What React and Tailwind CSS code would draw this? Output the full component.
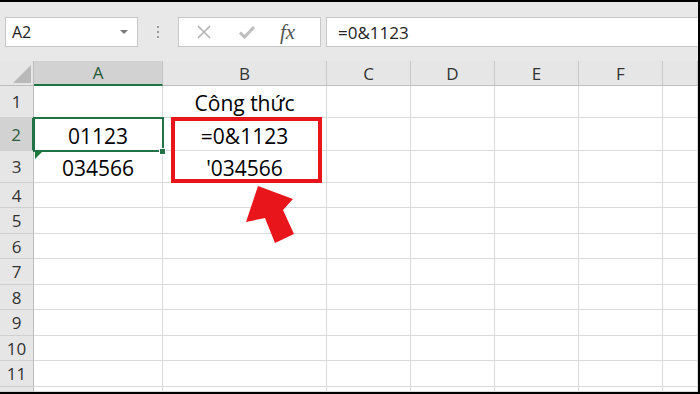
import React from 'react';

const FONT = { fontFamily: '"Open Sans", "Noto Sans", sans-serif' };

const COLS = [
  { key: 'A', label: 'A', w: 'w-[129px]' },
  { key: 'B', label: 'B', w: 'w-[164px]' },
  { key: 'C', label: 'C', w: 'w-[84px]' },
  { key: 'D', label: 'D', w: 'w-[84px]' },
  { key: 'E', label: 'E', w: 'w-[84px]' },
  { key: 'F', label: 'F', w: 'w-[84px]' },
  { key: 'G', label: '', w: 'w-[35px]' },
];

const ROWS = [
  { n: '1', h: 'h-[32px]', cells: { B: 'Công thức' } },
  { n: '2', h: 'h-[33px]', cells: { A: '01123', B: '=0&1123' }, active: true },
  { n: '3', h: 'h-[32px]', cells: { A: '034566', B: "'034566" } },
  { n: '4', h: 'h-[25px]', cells: {} },
  { n: '5', h: 'h-[26px]', cells: {} },
  { n: '6', h: 'h-[25px]', cells: {} },
  { n: '7', h: 'h-[26px]', cells: {} },
  { n: '8', h: 'h-[25px]', cells: {} },
  { n: '9', h: 'h-[26px]', cells: {} },
  { n: '10', h: 'h-[25px]', cells: {} },
  { n: '11', h: 'h-[26px]', cells: {} },
  { n: '', h: 'h-[5px]', cells: {} },
];

function Toolbar() {
  return (
    <div className="h-[59px] bg-[#e8e8e8] flex items-start pt-[15px] pl-[5px]" style={FONT}>
      {/* Name box */}
      <div className="w-[133px] h-[30px] bg-white border border-[#c8c8c8] flex items-center pl-[6px] pr-[9px]">
        <span className="text-[16px] text-[#222] leading-none">A2</span>
        <svg width="8" height="5" viewBox="0 0 8 5" className="ml-auto">
          <path d="M0 0 L8 0 L4 4 Z" fill="#7a7a7a" />
        </svg>
      </div>

      {/* Grip dots */}
      <div className="w-[40px] h-[30px] flex flex-col items-center justify-center gap-[3px]">
        <span className="w-[2px] h-[2px] bg-[#9a9a9a]" />
        <span className="w-[2px] h-[2px] bg-[#9a9a9a]" />
        <span className="w-[2px] h-[2px] bg-[#9a9a9a]" />
      </div>

      {/* Cancel / Enter / fx */}
      <div className="w-[143px] h-[30px] bg-white border border-[#c8c8c8] flex items-center">
        <svg width="16" height="16" viewBox="0 0 16 16" className="ml-[17px]">
          <path d="M2 2 L14 14 M14 2 L2 14" stroke="#b4b4b4" strokeWidth="1.6" />
        </svg>
        <svg width="18" height="16" viewBox="0 0 18 16" className="ml-[26px]">
          <path d="M2 8.5 L6.5 13 L16 3" stroke="#bdbdbd" strokeWidth="3" fill="none" />
        </svg>
        <span
          className="ml-[24px] text-[21px] italic text-[#555] leading-none"
          style={{ fontFamily: '"Liberation Serif", "DejaVu Serif", serif' }}
        >
          fx
        </span>
      </div>

      {/* Formula bar */}
      <div className="ml-[5px] flex-1 h-[30px] bg-white border-l border-t border-b border-[#c8c8c8] flex items-center pl-[11px]">
        <span className="text-[17px] text-[#222] leading-none">=0&amp;1123</span>
      </div>
    </div>
  );
}

function HeaderRow() {
  return (
    <div className="flex h-[25px]" style={FONT}>
      <div className="w-[34px] bg-[#e6e6e6] border-r border-b border-[#bdbdbd] relative">
        <svg width="34" height="25" viewBox="0 0 34 25" className="absolute inset-0">
          <path d="M13 22 L31 4 L31 22 Z" fill="#b9b9b9" />
        </svg>
      </div>
      {COLS.map((c) => (
        <div
          key={c.key}
          className={`${c.w} flex items-center justify-center text-[17px] leading-none ${
            c.key === 'A'
              ? 'bg-[#d2d2d2] text-[#1e5a34] border-r border-r-[#c4c4c4] border-b-2 border-b-[#217346]'
              : 'bg-[#e6e6e6] text-[#333] border-r border-r-[#c8c8c8] border-b border-b-[#bdbdbd]'
          }`}
        >
          {c.label}
        </div>
      ))}
    </div>
  );
}

function Row({ row }) {
  return (
    <div className={`flex ${row.h}`} style={FONT}>
      <div
        className={`w-[34px] flex items-center justify-center text-[17px] leading-none border-b border-b-[#cfcfcf] ${
          row.active
            ? 'bg-[#d2d2d2] text-[#2b5c3c] border-r-2 border-r-[#217346]'
            : 'bg-[#e6e6e6] text-[#333] border-r border-r-[#bdbdbd]'
        }`}
      >
        {row.n}
      </div>
      {COLS.map((c) => (
        <div
          key={c.key}
          className={`${c.w} flex items-center justify-center border-r border-b border-[#dadada] text-[21px] text-black leading-none pt-[4px]`}
        >
          {row.cells[c.key] || ''}
        </div>
      ))}
    </div>
  );
}

export default function App() {
  return (
    <div className="relative w-[700px] h-[394px] bg-black overflow-hidden">
      <div className="mt-[2px] w-[698px] h-[390px] bg-white overflow-hidden">
        <Toolbar />
        <HeaderRow />
        {ROWS.map((r, i) => (
          <Row key={i} row={r} />
        ))}
      </div>

      {/* Active cell A2 outline + fill handle */}
      <div className="absolute left-[33px] top-[117px] w-[131px] h-[35px] border-2 border-[#217346]" />
      <div className="absolute left-[159px] top-[148px] w-[7px] h-[7px] bg-[#217346] border border-white" />

      {/* Error indicator triangle in A3 */}
      <svg width="8" height="8" viewBox="0 0 8 8" className="absolute left-[35px] top-[152px]">
        <path d="M0 0 L7 0 L0 7 Z" fill="#1e7a3a" />
      </svg>

      {/* Red highlight box */}
      <div className="absolute left-[171px] top-[117px] w-[151px] h-[66px] border-4 border-[#e8161b]" />

      {/* Red arrow */}
      <svg width="700" height="394" viewBox="0 0 700 394" className="absolute left-0 top-0 pointer-events-none">
        <path
          d="M258 186 L293 199 L283 210 L294 234 L275 243 L265 218 L246 222 Z"
          fill="#e8161b"
        />
      </svg>
    </div>
  );
}
